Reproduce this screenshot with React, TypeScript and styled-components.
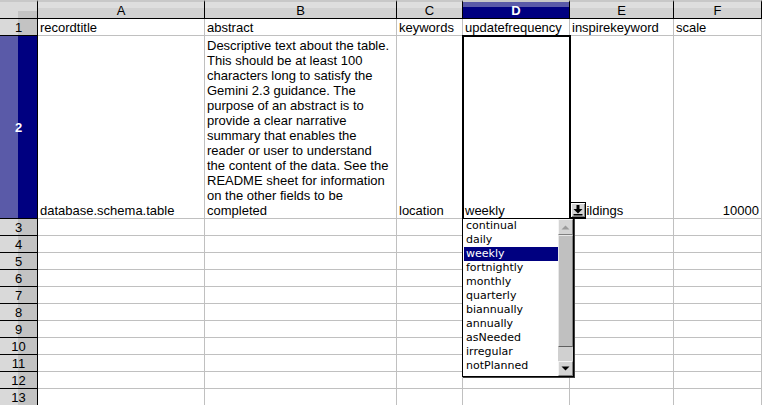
import React from 'react';
import styled, { createGlobalStyle } from 'styled-components';

const Global = createGlobalStyle`
  html, body { margin: 0; padding: 0; background: #ffffff; }
  body { font-family: "Liberation Sans", Arial, sans-serif; }
  * { box-sizing: border-box; }
`;

const Sheet = styled.div`
  display: grid;
  grid-template-columns: 38px 167px 192px 66px 107px 104px 1fr;
  grid-template-rows: 19px 17px 183px repeat(11, 17px);
  width: 762px;
  height: 405px;
  overflow: hidden;
  background: #ffffff;
  font-size: 13px;
  color: #000;
`;

const Corner = styled.div`
  border-right: 1px solid #000;
  border-bottom: 1px solid #000;
  border-top: 2px solid #c8c8c8;
  background:
    linear-gradient(to right, transparent 50%, #c4c4c4 50%) bottom / 100% 45% no-repeat,
    #dadada;
`;

const ColHeader = styled.div<{ $selected?: boolean }>`
  display: flex;
  align-items: center;
  justify-content: center;
  border-right: 1px solid #000;
  border-bottom: 1px solid #000;
  border-top: 2px solid #c8c8c8;
  padding-top: 1px;
  font-weight: ${(p) => (p.$selected ? 700 : 400)};
  color: ${(p) => (p.$selected ? '#fff' : '#000')};
  background: ${(p) =>
    p.$selected
      ? 'linear-gradient(to bottom, #5a5aa8 0 30%, #000080 30%)'
      : 'linear-gradient(to bottom, #dedede 0 40%, #d2d2d2 40%)'};
`;

const RowHeader = styled.div<{ $selected?: boolean }>`
  display: flex;
  align-items: center;
  justify-content: center;
  border-right: 1px solid #000;
  border-bottom: 1px solid #000;
  font-weight: ${(p) => (p.$selected ? 700 : 400)};
  color: ${(p) => (p.$selected ? '#fff' : '#000')};
  background: ${(p) =>
    p.$selected
      ? 'linear-gradient(to right, #5a5aa8 0 48%, #000080 48%)'
      : 'linear-gradient(to right, #d9d9d9 0 48%, #c3c3c3 48%)'};
`;

const Cell = styled.div<{ $bottom?: boolean; $right?: boolean }>`
  display: flex;
  align-items: ${(p) => (p.$bottom ? 'flex-end' : 'center')};
  justify-content: ${(p) => (p.$right ? 'flex-end' : 'flex-start')};
  border-right: 1px solid #c0c0c0;
  border-bottom: 1px solid #c0c0c0;
  padding: 0 2px 0 2px;
  line-height: 15px;
  white-space: nowrap;
  min-width: 0;
`;

const ActiveCell = styled(Cell)`
  position: relative;
  z-index: 2;
  outline: 2px solid #000;
  outline-offset: -1px;
`;

const Wrapped = styled.div`
  white-space: pre-line;
  line-height: 15px;
`;

const DropButton = styled.div`
  position: absolute;
  left: 107px;
  top: 166px;
  width: 16px;
  height: 17px;
  border: 1px solid #000;
  border-bottom-width: 2px;
  background: #d4d4d4;
  box-shadow: inset 1px 1px 0 #ffffff, inset -1px -1px 0 #808080;
  display: flex;
  align-items: center;
  justify-content: center;
`;

const ListBox = styled.div`
  position: absolute;
  left: -1px;
  top: 182px;
  width: 112px;
  height: 159px;
  border: 1px solid #000;
  box-shadow: 1px 1px 0 #404040;
  background: #fff;
  display: flex;
  z-index: 3;
`;

const Items = styled.div`
  flex: 1;
  padding-left: 1px;
  font-family: "DejaVu Sans", sans-serif;
  font-size: 11px;
`;

const Item = styled.div<{ $selected?: boolean }>`
  height: 14px;
  line-height: 14px;
  padding-left: 2px;
  background: ${(p) => (p.$selected ? '#000080' : 'transparent')};
  color: ${(p) => (p.$selected ? '#fff' : '#000')};
`;

const ScrollBar = styled.div`
  width: 15px;
  display: flex;
  flex-direction: column;
  background: #d0d0d0;
`;

const ScrollButton = styled.div<{ $h: number }>`
  height: ${(p) => p.$h}px;
  background: #d4d4d4;
  border-top: 1px solid #f4f4f4;
  border-left: 1px solid #f4f4f4;
  border-right: 1px solid #808080;
  border-bottom: 1px solid #808080;
  display: flex;
  align-items: center;
  justify-content: center;
`;

const Thumb = styled.div`
  height: 112px;
  background: #c0c0c0;
  border-top: 1px solid #e8e8e8;
  border-left: 1px solid #e8e8e8;
  border-right: 1px solid #808080;
  border-bottom: 1px solid #606060;
`;

const Track = styled.div`
  flex: 1;
  background: #d0d0d0;
`;

const cols = ['A', 'B', 'C', 'D', 'E', 'F'];
const options = [
  'continual',
  'daily',
  'weekly',
  'fortnightly',
  'monthly',
  'quarterly',
  'biannually',
  'annually',
  'asNeeded',
  'irregular',
  'notPlanned',
];

const abstract = [
  'Descriptive text about the table.',
  'This should be at least 100',
  'characters long to satisfy the',
  'Gemini 2.3 guidance. The',
  'purpose of an abstract is to',
  'provide a clear narrative',
  'summary that enables the',
  'reader or user to understand',
  'the content of the data. See the',
  'README sheet for information',
  'on the other fields to be',
  'completed',
].join('\n');

const DropIcon = () => (
  <svg width="12" height="12" viewBox="0 0 12 12">
    <rect x="4.5" y="1" width="3" height="4.5" fill="#000" />
    <polygon points="1.5,5 10.5,5 6,9.5" fill="#000" />
    <rect x="1.5" y="10" width="9" height="1.5" fill="#000" />
  </svg>
);

const Arrow = ({ up, color }: { up?: boolean; color: string }) => (
  <svg width="9" height="5" viewBox="0 0 9 5">
    <polygon points={up ? '0.5,4.5 8.5,4.5 4.5,0.5' : '0.5,0.5 8.5,0.5 4.5,4.5'} fill={color} />
  </svg>
);

export default function App() {
  const emptyRows = Array.from({ length: 11 }, (_, i) => i + 3);
  return (
    <>
      <Global />
      <Sheet>
        <Corner />
        {cols.map((c) => (
          <ColHeader key={c} $selected={c === 'D'}>
            {c}
          </ColHeader>
        ))}

        <RowHeader>1</RowHeader>
        <Cell>recordtitle</Cell>
        <Cell>abstract</Cell>
        <Cell>keywords</Cell>
        <Cell>updatefrequency</Cell>
        <Cell>inspirekeyword</Cell>
        <Cell>scale</Cell>

        <RowHeader $selected>2</RowHeader>
        <Cell $bottom>database.schema.table</Cell>
        <Cell $bottom>
          <Wrapped>{abstract}</Wrapped>
        </Cell>
        <Cell $bottom>location</Cell>
        <ActiveCell $bottom>
          weekly
          <DropButton>
            <DropIcon />
          </DropButton>
          <ListBox>
            <Items>
              {options.map((o) => (
                <Item key={o} $selected={o === 'weekly'}>
                  {o}
                </Item>
              ))}
            </Items>
            <ScrollBar>
              <ScrollButton $h={16}>
                <Arrow up color="#9a9a9a" />
              </ScrollButton>
              <Thumb />
              <Track />
              <ScrollButton $h={15}>
                <Arrow color="#000" />
              </ScrollButton>
            </ScrollBar>
          </ListBox>
        </ActiveCell>
        <Cell $bottom>buildings</Cell>
        <Cell $bottom $right>10000</Cell>

        {emptyRows.map((r) => (
          <React.Fragment key={r}>
            <RowHeader>{r}</RowHeader>
            {cols.map((c) => (
              <Cell key={c} />
            ))}
          </React.Fragment>
        ))}
      </Sheet>
    </>
  );
}
